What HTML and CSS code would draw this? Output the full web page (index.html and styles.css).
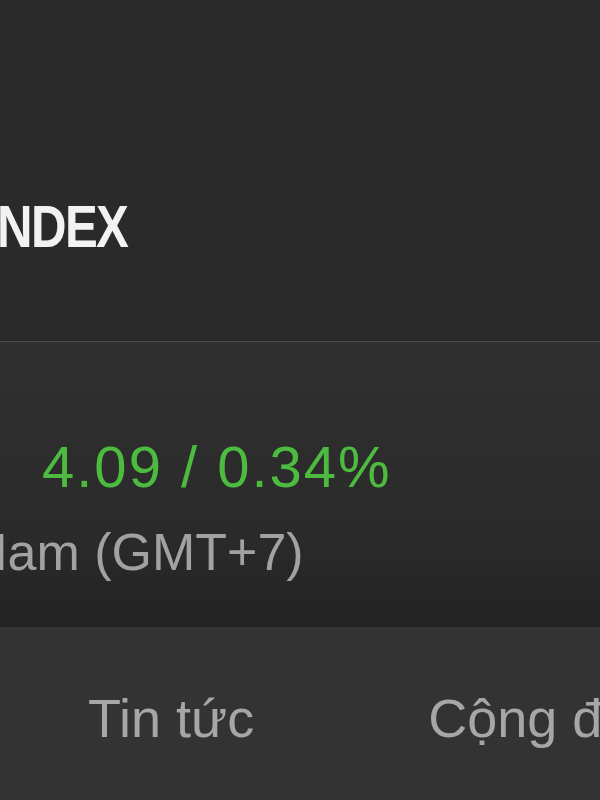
FILE: index.html
```html
<!DOCTYPE html>
<html lang="vi">
<head>
    <meta charset="UTF-8">
    <meta name="viewport" content="width=device-width, initial-scale=1.0">
    <title>VNINDEX</title>
    <link rel="stylesheet" href="styles.css">
</head>
<body>

<header class="index-header">
    <h1 class="index-name">VNINDEX</h1>
</header>

<div class="quote-panel">
    <p class="quote-change">4.09 / 0.34%</p>
    <p class="quote-time">Nam (GMT+7)</p>
</div>

<nav class="tab-bar">
    <a href="#" class="tab">Tin tức</a>
    <a href="#" class="tab">Cộng đồng</a>
</nav>

</body>
</html>
```

FILE: styles.css
```css
html, body {
    margin: 0;
    padding: 0;
}
body {
    width: 600px;
    height: 800px;
    overflow: hidden;
    background-color: #2a2a2a;
    font-family: "Liberation Sans", Arial, sans-serif;
}
.index-header {
    height: 342px;
    box-sizing: border-box;
    padding-top: 197px;
    border-bottom: 1px solid #4a4a4a;
}
.index-name {
    margin: 0 0 0 -80px;
    font-weight: bold;
    font-size: 60px;
    letter-spacing: -2px;
    line-height: 1;
    color: #f2f2f2;
    white-space: nowrap;
    transform: scaleX(0.82);
    transform-origin: left center;
}
.quote-panel {
    height: 285px;
    box-sizing: border-box;
    padding-top: 96px;
    background: linear-gradient(#303030, #2a2a2a 70%, #232323);
}
.quote-panel p {
    margin: 0;
    line-height: 1;
    white-space: nowrap;
}
.quote-change {
    margin-left: 42px !important;
    font-size: 58px;
    letter-spacing: 2px;
    color: #4dbb3f;
}
.quote-time {
    margin: 30px 0 0 -30px !important;
    font-size: 52px;
    color: #a2a2a2;
}
.tab-bar {
    height: 173px;
    box-sizing: border-box;
    padding-top: 64px;
    display: flex;
    background-color: #333333;
}
.tab {
    padding: 0 86px 0 88px;
    font-size: 54px;
    line-height: 1;
    color: #a6a6a6;
    text-decoration: none;
    white-space: nowrap;
}
```
